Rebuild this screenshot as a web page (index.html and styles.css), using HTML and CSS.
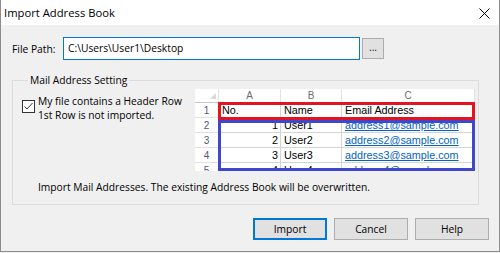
FILE: index.html
```html
<!DOCTYPE html>
<html lang="en">
<head>
<meta charset="utf-8">
<title>Import Address Book</title>
<link rel="stylesheet" href="styles.css">
</head>
<body>
<div class="window">
  <div class="titlebar">
    <span class="title">Import Address Book</span>
    <svg class="close" width="11" height="11" viewBox="0 0 11 11"><path d="M0.5 0.5 L10.5 10.5 M10.5 0.5 L0.5 10.5" stroke="#000" stroke-width="1" fill="none"/></svg>
  </div>
  <div class="content">
    <div class="file-row">
      <span class="file-label">File Path:</span>
      <div class="path-input">C:\Users\User1\Desktop</div>
      <div class="browse-btn">...</div>
    </div>
    <fieldset class="group">
      <legend class="group-title">Mail Address Setting</legend>
      <div class="group-main">
        <div class="check-row">
          <span class="checkbox">
            <svg width="13" height="13" viewBox="0 0 13 13"><path d="M2.5 6.5 L5 9 L10.5 3" stroke="#333" stroke-width="1" fill="none"/></svg>
          </span>
          <span class="check-text">My file contains a Header Row<br>1st Row is not imported.</span>
        </div>
        <div class="sheet">
          <div class="grid">
            <div class="cell hcorner"><span class="tri"></span></div>
            <div class="cell hcol">A</div>
            <div class="cell hcol">B</div>
            <div class="cell hcol">C</div>

            <div class="cell hrow">1</div>
            <div class="cell">No.</div>
            <div class="cell">Name</div>
            <div class="cell">Email Address</div>

            <div class="cell hrow">2</div>
            <div class="cell num">1</div>
            <div class="cell">User1</div>
            <div class="cell link">address1@sample.com</div>

            <div class="cell hrow">3</div>
            <div class="cell num">2</div>
            <div class="cell">User2</div>
            <div class="cell link">address2@sample.com</div>

            <div class="cell hrow">4</div>
            <div class="cell num">3</div>
            <div class="cell">User3</div>
            <div class="cell link">address3@sample.com</div>

            <div class="cell hrow">5</div>
            <div class="cell num">4</div>
            <div class="cell">User4</div>
            <div class="cell link">address4@sample.com</div>
          </div>
          <div class="mark mark-header"></div>
          <div class="mark mark-data"></div>
        </div>
      </div>
      <p class="note">Import Mail Addresses. The existing Address Book will be overwritten.</p>
    </fieldset>
    <div class="buttons">
      <div class="btn btn-default">Import</div>
      <div class="btn">Cancel</div>
      <div class="btn">Help</div>
    </div>
  </div>
</div>
</body>
</html>
```
FILE: styles.css
```css
* { box-sizing: border-box; }
html, body { margin: 0; padding: 0; background: #f0f0f0; }
body { font-family: "Open Sans", "Liberation Sans", sans-serif; font-size: 10.25px; color: #000; }

.window {
  width: 500px;
  height: 252px;
  border: 1px solid #8c8c8c;
  border-top: none;
  background: #f0f0f0;
  display: flex;
  flex-direction: column;
}

.titlebar {
  height: 25px;
  background: #fff;
  display: flex;
  align-items: center;
  justify-content: space-between;
  padding: 0 9px 0 3px;
}
.title { font-size: 11.25px; line-height: 14px; padding-top: 1px; }
.close { display: block; margin-top: 1px; }

.content {
  flex: 1;
  padding: 12px 10px 0 11px;
  display: flex;
  flex-direction: column;
}

.file-row { display: flex; align-items: center; height: 23px; }
.file-label { width: 51px; line-height: 14px; }
.path-input {
  width: 297px;
  height: 23px;
  border: 1px solid #0078d7;
  background: #fff;
  padding-left: 4px;
  line-height: 21px;
}
.browse-btn {
  width: 22px;
  height: 21px;
  margin-left: 2px;
  border: 1px solid #adadad;
  background: #e1e1e1;
  color: #1a1a4a;
  text-align: center;
  line-height: 17px;
}

.group {
  margin: 13px 0 0 0;
  padding: 0 0 10px 9px;
  width: 467px;
  min-width: 0;
  border: 1px solid #dcdcdc;
}
.group-title { margin-left: 6px; padding: 0 2px; line-height: 14px; }

.group-main { display: flex; align-items: flex-start; }
.check-row { width: 173px; display: flex; align-items: flex-start; margin-top: 8px; }
.checkbox {
  flex: none;
  width: 13px;
  height: 13px;
  margin-top: 5px;
  border: 1px solid #333;
  background: #fff;
  position: relative;
}
.checkbox svg { position: absolute; left: -1px; top: -1px; }
.check-text { margin-left: 3px; line-height: 13.5px; }

.sheet {
  position: relative;
  margin-top: 2px;
  width: 280px;
  height: 82px;
  overflow: hidden;
  background: #fff;
  font-family: "Liberation Sans", "Noto Sans CJK JP", sans-serif;
  font-size: 10.8px;
}
.grid {
  display: grid;
  grid-template-columns: 24px 62px 61px 133px;
  grid-template-rows: 14px repeat(5, 15px);
}
.cell {
  border-right: 1px solid #d4d4d4;
  border-bottom: 1px solid #d4d4d4;
  padding: 0 3px;
  line-height: 15px;
  white-space: nowrap;
  overflow: hidden;
}
.hcorner { position: relative; border-right-color: #e1e1e1; border-bottom-color: #c8c8c8; }
.tri {
  position: absolute;
  right: 2px;
  bottom: 3px;
  width: 0;
  height: 0;
  border-left: 6px solid transparent;
  border-bottom: 6px solid #d9d9d9;
}
.hcol {
  text-align: center;
  color: #6b6b6b;
  font-size: 10px;
  line-height: 13px;
  border-right-color: #e1e1e1;
  border-bottom-color: #c8c8c8;
}
.hrow {
  text-align: center;
  color: #4c5a78;
  font-size: 10px;
  padding: 0;
  border-right-color: #c8c8c8;
  border-bottom-color: #e1e1e1;
}
.num { text-align: right; padding-right: 2px; }
.link { color: #0563c1; text-decoration: underline; }

.mark { position: absolute; left: 23px; width: 257px; border: 3px solid; }
.mark-header { top: 13px; height: 18px; border-color: #e3141f; }
.mark-data { top: 31px; height: 51px; border-color: #3f48cc; }

.note { margin: 9px 0 0 16px; line-height: 14px; }

.buttons { display: flex; justify-content: flex-end; gap: 7px; margin-top: 13px; }
.btn {
  width: 74px;
  height: 22px;
  border: 1px solid #adadad;
  background: #e1e1e1;
  text-align: center;
  line-height: 20px;
}
.btn-default { border: 2px solid #0078d7; line-height: 18px; }
```
